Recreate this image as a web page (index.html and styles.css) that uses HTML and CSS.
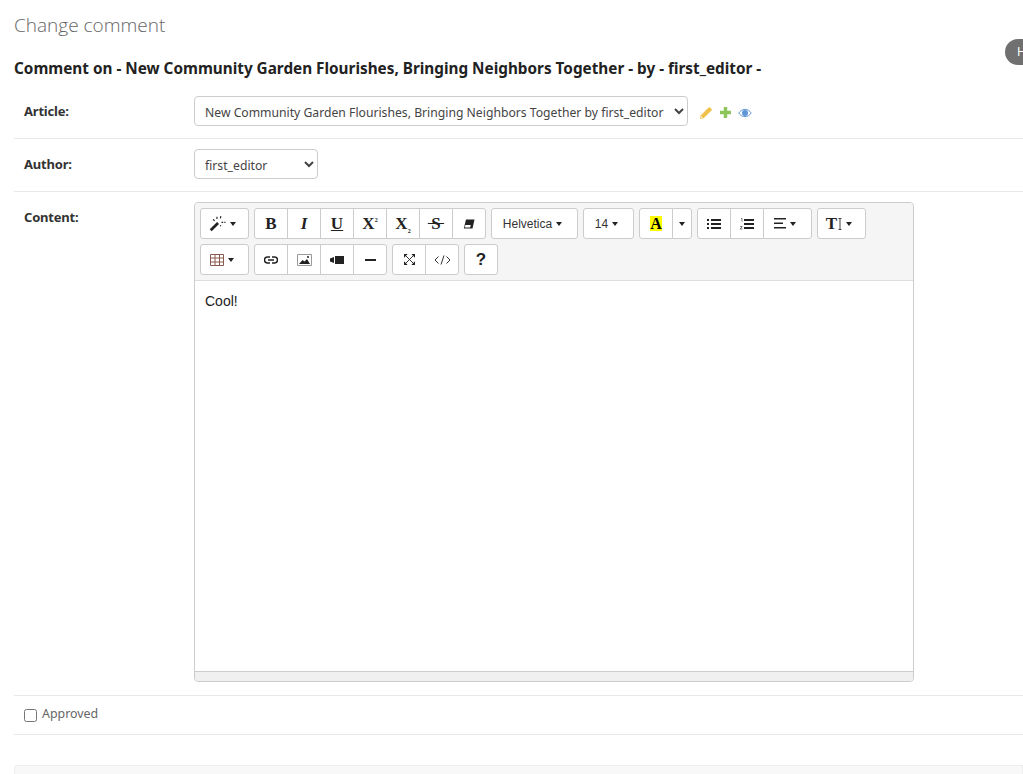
FILE: index.html
```html
<!DOCTYPE html>
<html lang="en">
<head>
    <meta charset="UTF-8">
    <title>Change comment</title>
    <link rel="stylesheet" href="styles.css">
</head>
<body>
    <div class="help-pill">H</div>
    <div class="content">
        <h1>Change comment</h1>
        <h2>Comment on - New Community Garden Flourishes, Bringing Neighbors Together - by - first_editor -</h2>
        <form>
            <div class="form-row">
                <label class="field-label">Article:</label>
                <select class="article-select">
                    <option>New Community Garden Flourishes, Bringing Neighbors Together by first_editor</option>
                </select>
                <div class="related">
                    <svg width="14" height="14" viewBox="0 0 14 14"><path fill="#efc04a" d="M1 13l.7-3.6L9.6 1.5a1 1 0 0 1 1.4 0l1.5 1.5a1 1 0 0 1 0 1.4L4.600 12.300z"/><path fill="#fff" d="M2.300 10.200l1.500 1.500-1.900.4z"/></svg>
                    <svg width="13" height="13" viewBox="0 0 13 13"><path fill="#8cc65a" d="M4.800 1h3.400v3.800H12v3.400H8.200V12H4.800V8.200H1V4.800h3.800z"/></svg>
                    <svg width="14" height="14" viewBox="0 0 14 14"><path fill="none" stroke="#5f95d6" d="M.8 7C2.500 4.500 4.600 3.400 7 3.400S11.500 4.500 13.200 7C11.500 9.500 9.400 10.600 7 10.600S2.500 9.500.8 7z"/><circle cx="7" cy="7" r="3" fill="#5f95d6"/></svg>
                </div>
            </div>
            <div class="form-row">
                <label class="field-label">Author:</label>
                <select class="author-select"><option>first_editor</option></select>
            </div>
            <div class="form-row form-row-editor">
                <label class="field-label">Content:</label>
                <div class="editor">
                    <div class="toolbar">
                        <div class="tb-row">
                            <div class="btn-group">
                                <button type="button" class="tb-btn wide">
                                    <svg width="17" height="17" viewBox="0 0 15 15"><path stroke="#222" stroke-width="2.400" d="M1.500 13.500L8 7"/><path stroke="#222" stroke-width="1" fill="none" d="M7 1.500v2M10.500 1l-.5 2M3.500 4l1.500 1M11 6.500h1.500M13.500 6.500h1M10 9l.5 1"/></svg>
                                    <span class="caret"></span>
                                </button>
                            </div>
                            <div class="btn-group">
                                <button type="button" class="tb-btn glyph">B</button>
                                <button type="button" class="tb-btn glyph ital">I</button>
                                <button type="button" class="tb-btn glyph under">U</button>
                                <button type="button" class="tb-btn glyph"><span>X<sup>2</sup></span></button>
                                <button type="button" class="tb-btn glyph"><span>X<sub>2</sub></span></button>
                                <button type="button" class="tb-btn glyph strike"><span>&thinsp;S&thinsp;</span></button>
                                <button type="button" class="tb-btn">
                                    <svg width="12" height="12" viewBox="0 0 12 12"><path fill="#222" d="M3 1.500h8.500L9.500 10.500H.8z"/><path fill="#fff" d="M2.300 7h5.500l-.7 2.400H1.800z"/></svg>
                                </button>
                            </div>
                            <div class="btn-group">
                                <button type="button" class="tb-btn text-btn font-btn">Helvetica <span class="caret"></span></button>
                            </div>
                            <div class="btn-group">
                                <button type="button" class="tb-btn text-btn size-btn">14 <span class="caret"></span></button>
                            </div>
                            <div class="btn-group">
                                <button type="button" class="tb-btn"><span class="color-a">A</span></button>
                                <button type="button" class="tb-btn narrow"><span class="caret"></span></button>
                            </div>
                            <div class="btn-group">
                                <button type="button" class="tb-btn">
                                    <svg width="14" height="12" viewBox="0 0 14 12"><path fill="#222" d="M0 1h2v2H0zM4 1h10v2H4zM0 5h2v2H0zM4 5h10v2H4zM0 9h2v2H0zM4 9h10v2H4z"/></svg>
                                </button>
                                <button type="button" class="tb-btn">
                                    <svg width="14" height="12" viewBox="0 0 14 12"><path fill="#222" d="M4 1h10v2H4zM4 5h10v2H4zM4 9h10v2H4z"/><path fill="none" stroke="#555" stroke-width=".8" d="M1 .5h1v3M.2 8.500h2L.2 11h2.200"/></svg>
                                </button>
                                <button type="button" class="tb-btn wide">
                                    <svg width="12" height="11" viewBox="0 0 12 11"><path fill="#222" d="M0 0h12v1.600H0zM0 4.500h9v1.600H0zM0 9h12v1.600H0z"/></svg>
                                    <span class="caret"></span>
                                </button>
                            </div>
                            <div class="btn-group">
                                <button type="button" class="tb-btn wide">
                                    <span class="height-t">T</span>
                                    <svg width="4" height="12" viewBox="0 0 4 12"><path fill="none" stroke="#444" d="M.5.500h3M2 .5v11M.5 11.500h3"/></svg>
                                    <span class="caret"></span>
                                </button>
                            </div>
                        </div>
                        <div class="tb-row">
                            <div class="btn-group">
                                <button type="button" class="tb-btn wide">
                                    <svg width="14" height="12" viewBox="0 0 14 12"><path fill="none" stroke="#8a5a50" d="M.5.500h13v11H.5zM.5 4h13M.5 8h13M5 .5v11M9.500.5v11"/></svg>
                                    <span class="caret"></span>
                                </button>
                            </div>
                            <div class="btn-group">
                                <button type="button" class="tb-btn">
                                    <svg width="14" height="8" viewBox="0 0 14 8"><path fill="none" stroke="#222" stroke-width="1.500" d="M6 1H3.500a3 3 0 0 0 0 6H6M8 1h2.500a3 3 0 0 1 0 6H8M4 4h6"/></svg>
                                </button>
                                <button type="button" class="tb-btn">
                                    <svg width="15" height="12" viewBox="0 0 15 12"><path fill="none" stroke="#999" d="M.5.500h14v11H.5z"/><path fill="#222" d="M2 10l3.500-4 2 1.500L10 5l3 5z"/><circle cx="11" cy="3" r="1" fill="#222"/></svg>
                                </button>
                                <button type="button" class="tb-btn">
                                    <svg width="14" height="8" viewBox="0 0 14 8"><path fill="#222" d="M5 0h9v8H5zM0 2.500l4-1.500v6L0 5.500z"/></svg>
                                </button>
                                <button type="button" class="tb-btn">
                                    <svg width="11" height="2" viewBox="0 0 11 2"><path fill="#222" d="M0 0h11v2H0z"/></svg>
                                </button>
                            </div>
                            <div class="btn-group">
                                <button type="button" class="tb-btn">
                                    <svg width="11" height="11" viewBox="0 0 12 12"><path fill="none" stroke="#222" stroke-width="1" d="M2 2l8 8M10 2l-8 8"/><path fill="#222" d="M0 0h4L0 4zM12 0v4L8 0zM0 12V8l4 4zM12 12H8l4-4z"/></svg>
                                </button>
                                <button type="button" class="tb-btn">
                                    <svg width="17" height="10" viewBox="0 0 17 10"><path fill="none" stroke="#333" d="M4.500 1.500L1 5l3.500 3.500M12.500 1.500L16 5l-3.500 3.500M10 .5L7 9.500"/></svg>
                                </button>
                            </div>
                            <div class="btn-group">
                                <button type="button" class="tb-btn glyph help">?</button>
                            </div>
                        </div>
                    </div>
                    <div class="editable">Cool!</div>
                    <div class="statusbar"></div>
                </div>
            </div>
            <div class="form-row form-row-check">
                <input type="checkbox" id="approved">
                <label for="approved">Approved</label>
            </div>
            <div class="submit-row"></div>
        </form>
    </div>
</body>
</html>
```

FILE: styles.css
```css
html, body {
    height: 100%;
    overflow: hidden;
}
body {
    margin: 0;
    background: white;
    color: #333;
    font-family: "Noto Sans", Arial, sans-serif;
    font-size: 13px;
}
.content {
    padding: 13px 0 0 14px;
}
h1 {
    margin: 0;
    font-family: "Open Sans", sans-serif;
    font-size: 19px;
    font-weight: 300;
    line-height: 24px;
    color: #666;
}
h2 {
    margin: 21px 0 8px;
    font-size: 15.3px;
    font-weight: 700;
    line-height: 20px;
    color: #222;
}
.form-row {
    display: flex;
    padding: 10px 10px 12px;
    border-bottom: 1px solid #e8e8e8;
}
.field-label {
    flex: 0 0 170px;
    font-size: 13px;
    font-weight: 700;
    line-height: 30px;
    color: #333;
    letter-spacing: -0.2px;
}
select {
    height: 30px;
    padding: 2px 6px 0;
    background: white;
    border: 1px solid #ccc;
    border-radius: 4px;
    font-family: "Noto Sans", Arial, sans-serif;
    font-size: 12.2px;
    color: #444;
}
.article-select {
    width: 494px;
}
.author-select {
    width: 124px;
}
.related {
    display: flex;
    align-items: center;
    gap: 6px;
    margin-left: 11px;
    height: 30px;
    padding-top: 3px;
    box-sizing: border-box;
}
.form-row-editor {
    padding-bottom: 13px;
}
.editor {
    width: 720px;
    height: 480px;
    box-sizing: border-box;
    display: flex;
    flex-direction: column;
    border: 1px solid #ccc;
    border-radius: 4px;
}
.toolbar {
    padding: 0 5px 5px;
    background: #f5f5f5;
    border-bottom: 1px solid #ddd;
    border-radius: 4px 4px 0 0;
}
.tb-row {
    display: flex;
    gap: 5px;
    margin-top: 5px;
}
.btn-group {
    display: flex;
}
.tb-btn {
    display: flex;
    align-items: center;
    justify-content: center;
    width: 34px;
    height: 31px;
    padding: 0;
    margin-left: -1px;
    background: white;
    border: 1px solid #ccc;
    color: #222;
}
.btn-group .tb-btn:first-child {
    margin-left: 0;
    border-radius: 3px 0 0 3px;
}
.btn-group .tb-btn:last-child {
    border-top-right-radius: 3px;
    border-bottom-right-radius: 3px;
}
.btn-group .tb-btn:only-child {
    border-radius: 3px;
}
.tb-btn.wide {
    width: 49px;
    gap: 4px;
    padding-right: 5px;
}
.tb-btn.narrow {
    width: 20px;
}
.glyph {
    font-family: "Liberation Serif", serif;
    font-size: 17px;
    font-weight: 700;
}
.ital {
    font-style: italic;
}
.under {
    text-decoration: underline;
    text-underline-offset: 1px;
}
.strike span {
    text-decoration: line-through;
}
.glyph sup, .glyph sub {
    font-size: 6px;
    line-height: 0;
}
.help {
    font-family: "Liberation Sans", sans-serif;
}
.text-btn {
    gap: 4px;
    padding-right: 4px;
    font-family: "Liberation Sans", sans-serif;
    font-size: 12px;
    color: #333;
}
.tb-btn.font-btn {
    width: 87px;
}
.tb-btn.size-btn {
    width: 51px;
}
.caret {
    width: 0;
    height: 0;
    border-top: 4px solid #222;
    border-left: 3px solid transparent;
    border-right: 3px solid transparent;
}
.color-a {
    width: 12px;
    height: 15px;
    background: #ff0;
    font-family: "Liberation Serif", serif;
    font-size: 16px;
    font-weight: 700;
    line-height: 15px;
    color: #000;
}
.height-t {
    font-family: "Liberation Serif", serif;
    font-size: 17px;
    font-weight: 700;
    margin-right: -3px;
}
.editable {
    flex: 1;
    padding: 10px;
    font-family: "Liberation Sans", sans-serif;
    font-size: 14px;
    line-height: 20px;
    color: #222;
}
.statusbar {
    height: 9px;
    background: #f0f0f0;
    border-top: 1px solid #ccc;
    border-radius: 0 0 4px 4px;
}
.form-row-check {
    align-items: flex-start;
    height: 39px;
    box-sizing: border-box;
    padding: 0 10px;
}
.form-row-check input {
    width: 13px;
    height: 13px;
    margin: 13px 5px 0 0;
}
.form-row-check label {
    margin-top: 8px;
    font-size: 12.4px;
    line-height: 20px;
    color: #666;
}
.submit-row {
    height: 9px;
    margin-top: 30px;
    box-sizing: border-box;
    background: #f8f8f8;
    border: 1px solid #eee;
    border-bottom: 0;
    border-radius: 4px 0 0 0;
}
.help-pill {
    position: absolute;
    top: 39px;
    right: 0;
    width: 18px;
    height: 26px;
    background: #707070;
    border-radius: 13px 0 0 13px;
    color: white;
    font-size: 12px;
    line-height: 26px;
    text-indent: 12px;
    overflow: hidden;
}
```
